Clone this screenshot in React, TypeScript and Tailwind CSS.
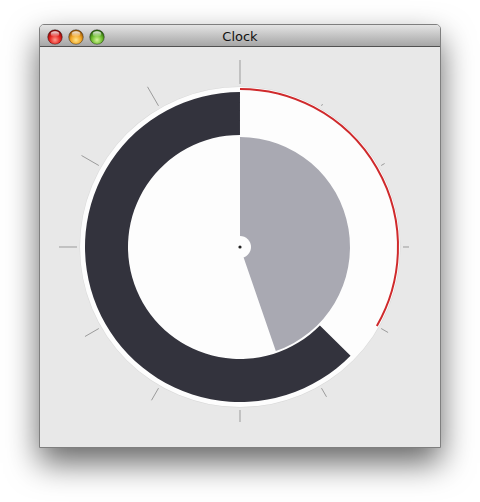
import React from "react";

const C = 200;
function p(r: number, a: number): string {
  const rad = (a * Math.PI) / 180;
  return `${(C + r * Math.sin(rad)).toFixed(2)} ${(C - r * Math.cos(rad)).toFixed(2)}`;
}

function Light({ id, c1, c2, c3 }: { id: string; c1: string; c2: string; c3: string }) {
  return (
    <svg width="16" height="16" viewBox="0 0 16 16">
      <defs>
        <radialGradient id={`g${id}`} cx="50%" cy="70%" r="60%">
          <stop offset="0%" stopColor={c1} />
          <stop offset="60%" stopColor={c2} />
          <stop offset="100%" stopColor={c3} />
        </radialGradient>
        <linearGradient id={`h${id}`} x1="0" y1="0" x2="0" y2="1">
          <stop offset="0%" stopColor="#fff" stopOpacity="0.9" />
          <stop offset="100%" stopColor="#fff" stopOpacity="0.05" />
        </linearGradient>
      </defs>
      <circle cx="8" cy="8" r="7.3" fill={`url(#g${id})`} stroke="rgba(0,0,0,0.45)" strokeWidth="0.8" />
      <ellipse cx="8" cy="5" rx="4.3" ry="2.8" fill={`url(#h${id})`} />
    </svg>
  );
}

export default function App() {
  const ticks = Array.from({ length: 12 }, (_, i) => i + 1);
  const dark = `M ${p(155, 134.5)} A 155 155 0 1 1 ${p(155, 359.99)} L ${p(112, 359.99)} A 112 112 0 1 0 ${p(112, 134.5)} Z`;
  const gray = `M 200 200 L ${p(110, 0)} A 110 110 0 0 1 ${p(110, 161)} Z`;
  const red = `M ${p(158, 0)} A 158 158 0 0 1 ${p(158, 120)}`;
  return (
    <div className="w-[480px] h-[502px] bg-white pt-[24px] pl-[39px]">
      <div className="w-[402px] h-[424px] flex flex-col border border-[#7f7f7f] rounded-t-[5px] shadow-[0_15px_32px_rgba(0,0,0,0.6)] bg-[#e8e8e8]">
        <div className="h-[22px] relative flex items-center justify-center rounded-t-[4px] bg-gradient-to-b from-[#e4e4e4] to-[#a6a6a6] border-b border-[#515151]">
          <div className="absolute left-[7px] top-[4px] flex gap-[5px]">
            <Light id="r" c1="#ff9a8c" c2="#e5231f" c3="#8c0c0a" />
            <Light id="y" c1="#ffe58a" c2="#f0a323" c3="#9b5a08" />
            <Light id="g" c1="#d4f59a" c2="#6dbc2d" c3="#2f6a0d" />
          </div>
          <span className="text-[13px] text-[#111] leading-none pt-[1px]" style={{ fontFamily: '"DejaVu Sans", Verdana, sans-serif' }}>
            Clock
          </span>
        </div>
        <div className="flex-1 flex items-center justify-center">
          <svg width="400" height="400" viewBox="0 0 400 400">
            {ticks.map((i) => {
              const a = i * 30;
              const [x1, y1] = p(163, a).split(" ");
              const [x2, y2] = p(163 + 2 * i, a).split(" ");
              return <line key={i} x1={x1} y1={y1} x2={x2} y2={y2} stroke="#9b9b9b" strokeWidth="1" />;
            })}
            <circle cx="200" cy="200" r="160.5" fill="#d8d8d8" />
            <circle cx="200" cy="200" r="160" fill="#fdfdfd" />
            <path d={red} fill="none" stroke="#cf2a2c" strokeWidth="2" />
            <path d={dark} fill="#33333d" />
            <path d={gray} fill="#a9a9b2" />
            <circle cx="200" cy="200" r="11" fill="#fdfdfd" />
            <circle cx="200" cy="200" r="1.6" fill="#222" />
          </svg>
        </div>
      </div>
    </div>
  );
}
